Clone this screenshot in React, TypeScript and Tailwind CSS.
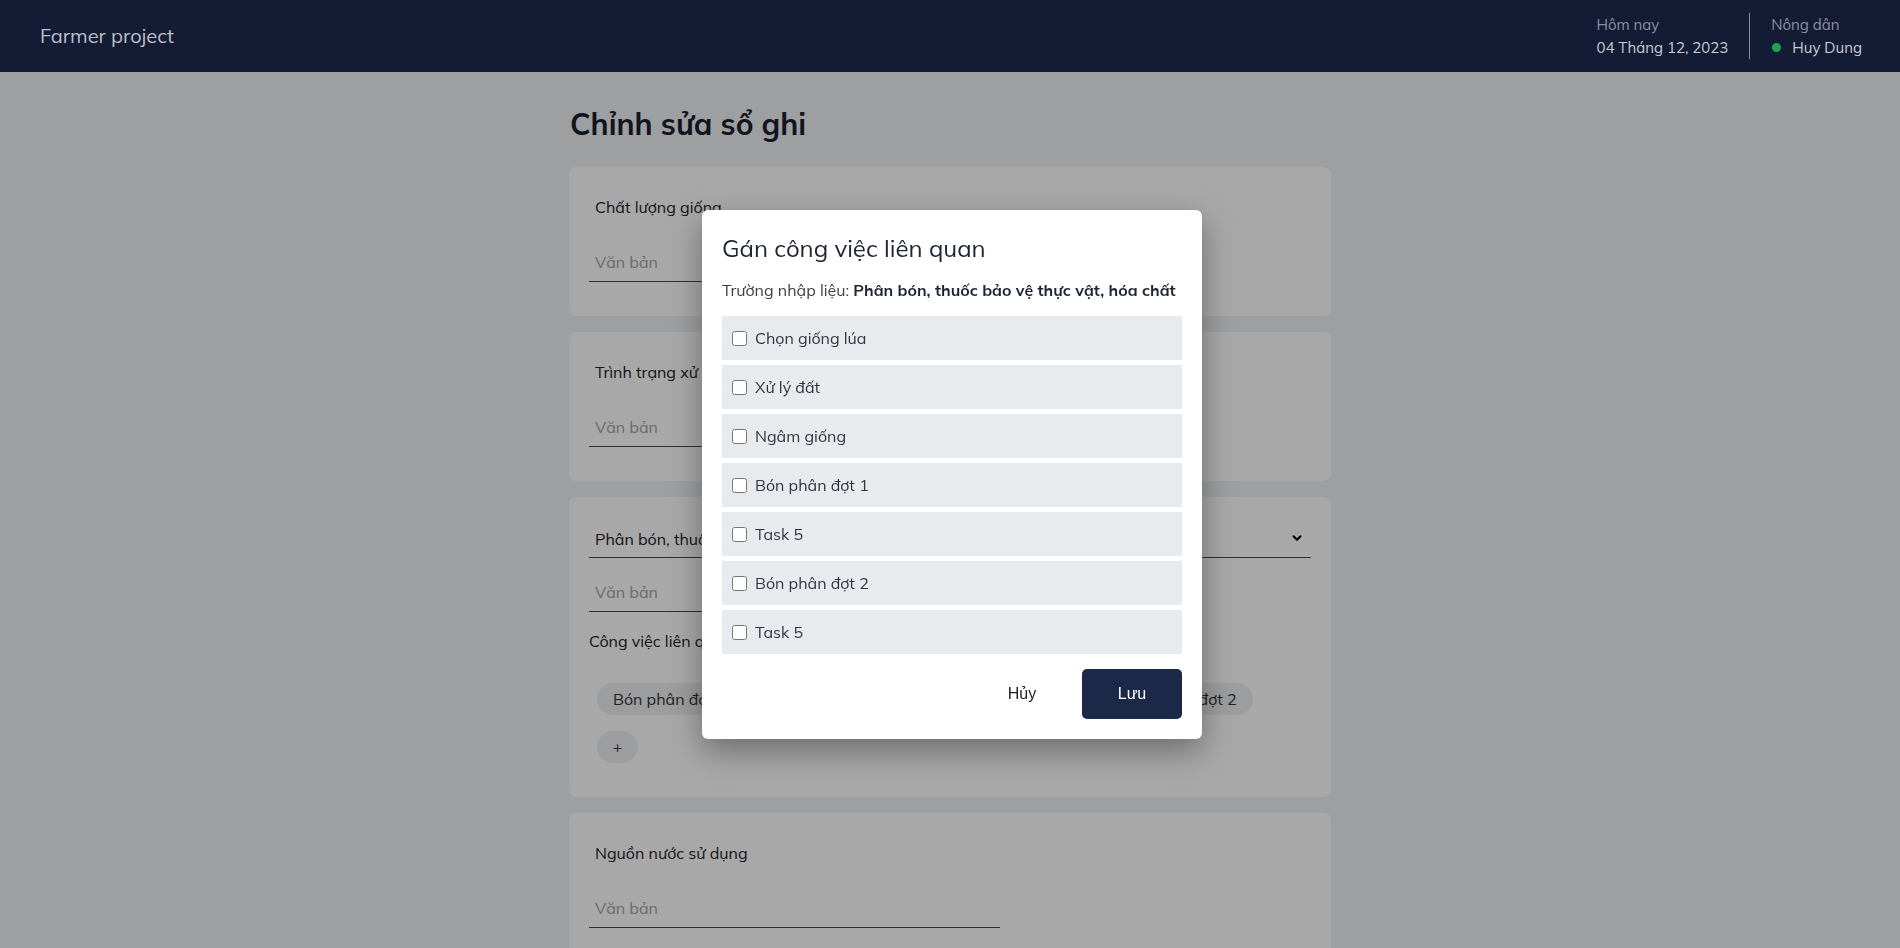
import { ChevronDown } from 'lucide-react';

const tasks = [
  'Chọn giống lúa',
  'Xử lý đất',
  'Ngâm giống',
  'Bón phân đợt 1',
  'Task 5',
  'Bón phân đợt 2',
  'Task 5',
];

const chips = ['Bón phân đợt 1', 'Ngâm giống', 'Xử lý đất', 'Task 5', 'Bón phân đợt 2'];

function TextField({ label }: { label: string }) {
  return (
    <div className="bg-white rounded-[7px] px-5 pt-[28px] pb-[34px]">
      <div className="pl-[6px] text-[16px] leading-6 text-[#222]">{label}</div>
      <div className="mt-[23px] w-[411px] h-10 border-b border-[#4a4a4a] px-[6px] flex items-center text-[16px] text-[#a3a3a3]">
        Văn bản
      </div>
    </div>
  );
}

function Header() {
  return (
    <header className="h-[72px] bg-[#131b35] flex items-center justify-between pl-10 pr-[38px] relative z-20">
      <div className="text-[20px] text-[#bcbfc6]">Farmer project</div>
      <div className="flex items-center">
        <div className="leading-[23px]">
          <div className="text-[15px] text-[#8c909b]">Hôm nay</div>
          <div className="text-[15px] text-[#caccd3]">04 Tháng 12, 2023</div>
        </div>
        <div className="w-px h-[46px] bg-[#8b8f99] mx-[21px]" />
        <div className="leading-[23px]">
          <div className="text-[15px] text-[#8c909b]">Nông dân</div>
          <div className="flex items-center text-[15px] text-[#caccd3]">
            <span className="w-[9px] h-[9px] rounded-full bg-[#1fa257] ml-[1px] mr-[11px]" />
            Huy Dung
          </div>
        </div>
      </div>
    </header>
  );
}

function TaskModal() {
  return (
    <div className="fixed inset-0 z-40 flex items-center justify-center pl-[4px]">
      <div className="w-[500px] bg-white rounded-[6px] px-5 pt-[22px] pb-5 shadow-[0_12px_32px_rgba(0,0,0,0.35)]">
        <h2 className="text-[24px] leading-8 text-[#1e2533]">Gán công việc liên quan</h2>
        <p className="mt-[14px] text-[16px] leading-6 text-[#3a3f4a]">
          Trường nhập liệu: <span className="font-bold text-[#1e2533]">Phân bón, thuốc bảo vệ thực vật, hóa chất</span>
        </p>
        <div className="mt-[14px] flex flex-col gap-[5px]">
          {tasks.map((t, i) => (
            <label key={i} className="h-11 bg-[#e8ebee] flex items-center pl-[10px] text-[16px] text-[#2f3542]">
              <input type="checkbox" className="w-[15px] h-[15px] mr-[8px] mt-[1px]" />
              {t}
            </label>
          ))}
        </div>
        <div className="mt-[15px] flex justify-end gap-[10px]" style={{ fontFamily: '"Liberation Sans", Arial, sans-serif' }}>
          <button className="w-[100px] h-[50px] text-[16px] text-[#222]">Hủy</button>
          <button className="w-[100px] h-[50px] rounded-[5px] bg-[#1b2848] text-[16px] text-white">Lưu</button>
        </div>
      </div>
    </div>
  );
}

export default function App() {
  return (
    <div className="min-h-screen bg-[#eef1f5]" style={{ fontFamily: 'Mulish, Lato, "Noto Sans", sans-serif' }}>
      <Header />
      <main className="w-[762px] mx-auto pt-[34px] pb-10">
        <h1 className="text-[30px] leading-9 font-bold text-[#1b2130] pl-[1px]">Chỉnh sửa sổ ghi</h1>
        <div className="mt-[25px] flex flex-col gap-4">
          <TextField label="Chất lượng giống" />
          <TextField label="Trình trạng xử lý đất" />
          <div className="bg-white rounded-[7px] px-5 pt-[21px] pb-[26px]">
            <div className="h-10 border-b border-[#4a4a4a] px-[6px] flex items-center justify-between text-[16px] text-[#222]">
              <span className="pt-[2px]">Phân bón, thuốc bảo vệ thực vật, hóa chất</span>
              <ChevronDown size={14} strokeWidth={3.5} className="text-black mr-[1px]" />
            </div>
            <div className="mt-[14px] w-[411px] h-10 border-b border-[#4a4a4a] px-[6px] flex items-center text-[16px] text-[#a3a3a3]">
              Văn bản
            </div>
            <div className="mt-[17px] text-[16px] leading-6 text-[#222]">Công việc liên quan</div>
            <div className="mt-[22px] flex flex-col">
              <div className="flex">
                {chips.map((c, i) => (
                  <span key={i} className="m-2 h-8 px-4 rounded-full bg-[#eceff2] flex items-center text-[16px] text-[#333]">
                    {c}
                  </span>
                ))}
              </div>
              <div className="flex">
                <span className="m-2 h-8 w-[41px] rounded-full bg-[#eceff2] flex items-center justify-center text-[16px] text-[#333]">
                  +
                </span>
              </div>
            </div>
          </div>
          <TextField label="Nguồn nước sử dụng" />
          <TextField label="Ghi chú" />
        </div>
      </main>
      <div className="fixed inset-x-0 bottom-0 top-[72px] z-30 bg-black/[0.34]" />
      <TaskModal />
    </div>
  );
}
